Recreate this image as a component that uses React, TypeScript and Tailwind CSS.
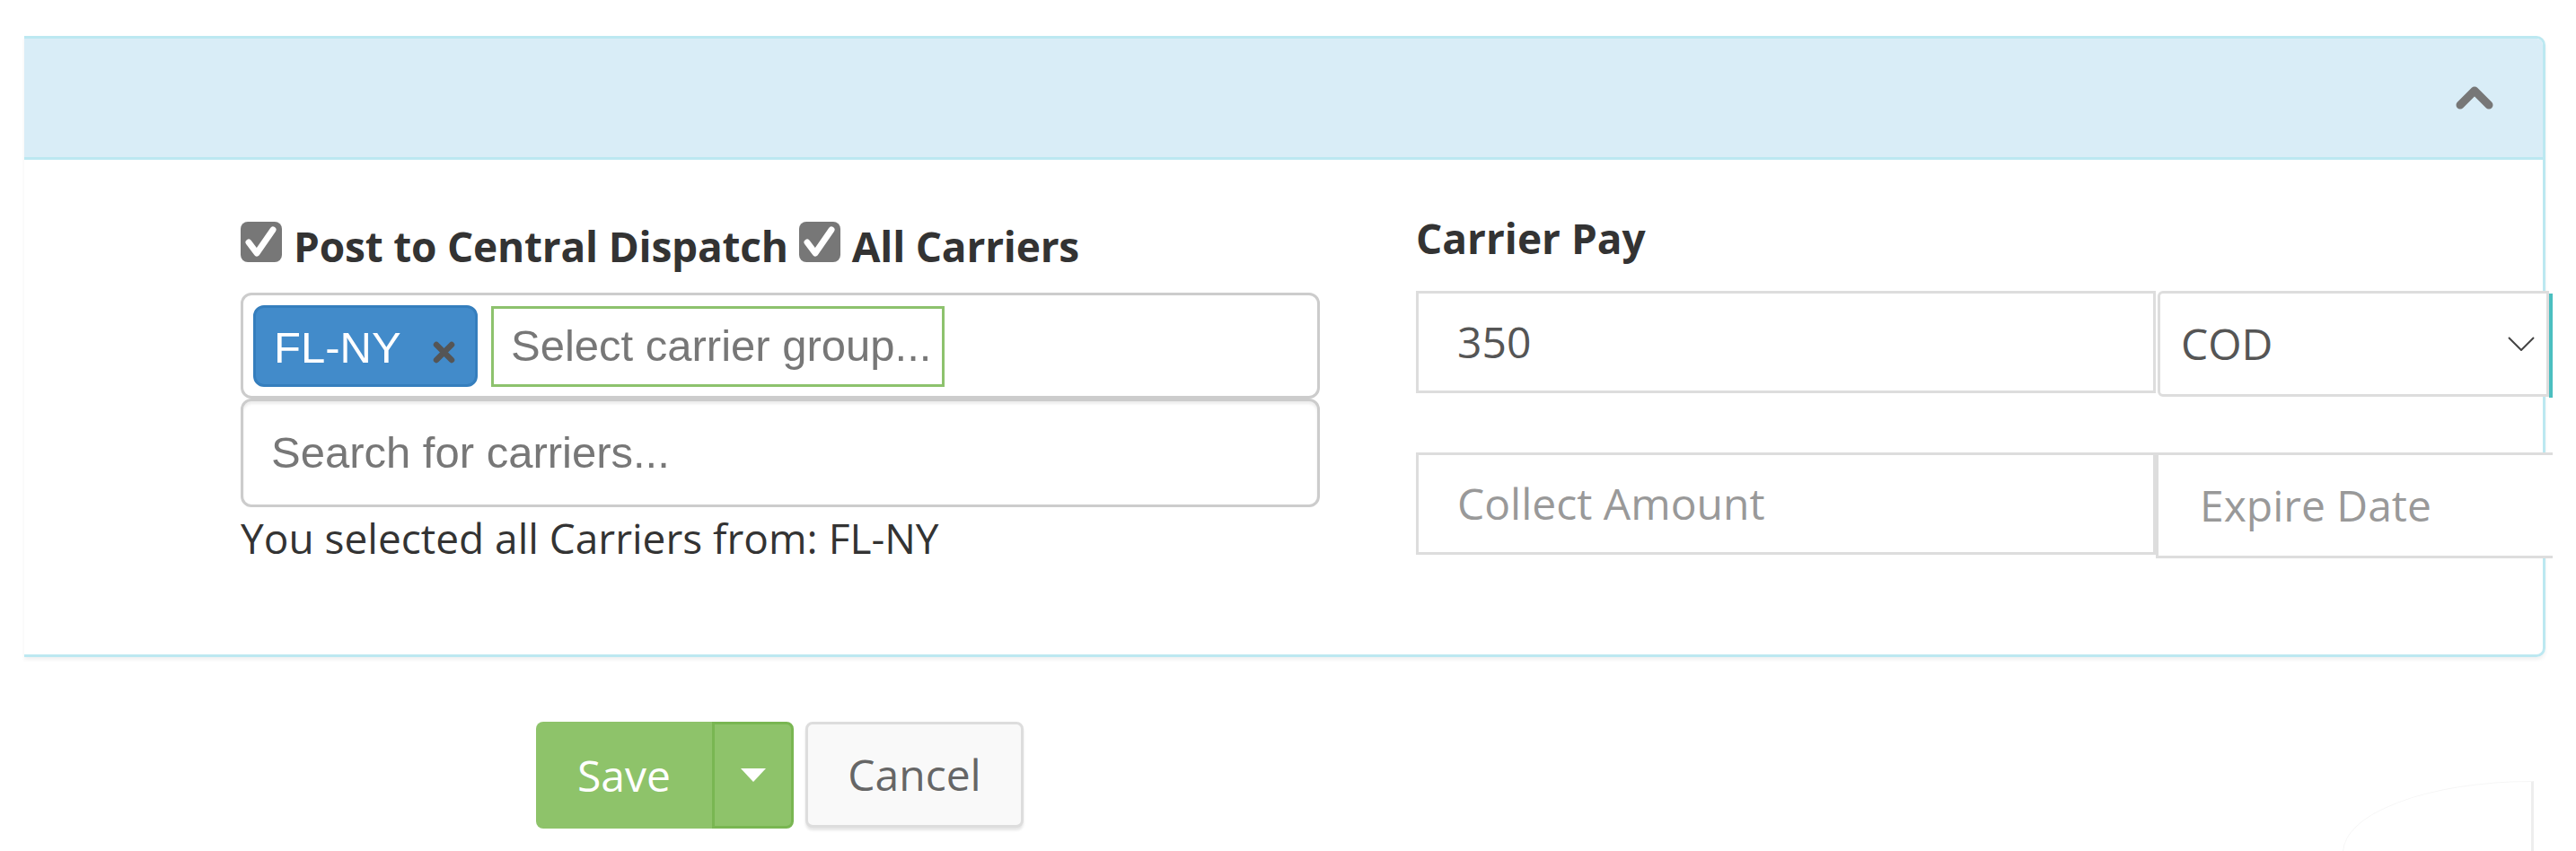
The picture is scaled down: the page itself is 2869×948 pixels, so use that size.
import React from "react";

function Check() {
  return (
    <div className="relative w-[46px] h-[45px] shrink-0 rounded-[8px] bg-[#777777]">
      <svg className="absolute left-0 top-0 block" width="46" height="45" viewBox="0 0 46 45">
        <path d="M9 23 L18 35 L36 9" fill="none" stroke="#ffffff" strokeWidth="7" strokeLinecap="round" strokeLinejoin="round" />
      </svg>
    </div>
  );
}

export default function App() {
  return (
    <div className="relative w-[2869px] h-[948px] overflow-hidden bg-white pt-[40px] font-['Open_Sans','Noto_Sans',sans-serif]">
      {/* Panel */}
      <div className="ml-[27px] w-[2808px] border-t-[3px] border-r-[3px] border-b-[3px] border-[#bce8f1] rounded-r-[10px] shadow-[0_3px_4px_rgba(0,0,0,0.06)]">
        {/* Header */}
        <div className="h-[135px] bg-[#d9edf7] border-b-[3px] border-[#bce8f1] rounded-tr-[7px] flex items-center justify-end pr-[54px]">
          <svg width="44" height="28" viewBox="0 0 44 28" className="block">
            <polyline points="6,22 22,6 38,22" fill="none" stroke="#777777" strokeWidth="9" strokeLinecap="round" strokeLinejoin="round" />
          </svg>
        </div>
        {/* Body */}
        <div className="h-[551px] flex">
          {/* Left column */}
          <div className="ml-[241px] w-[1202px] shrink-0 pt-[66px]">
            <div className="flex items-baseline h-[60px] leading-[60px] text-[46px] font-bold text-[#333333] tracking-[-0.2px]">
              <Check />
              <span className="ml-[13px]">Post to Central Dispatch</span>
              <div className="ml-[12px] flex items-baseline">
                <Check />
              </div>
              <span className="ml-[13px]">All Carriers</span>
            </div>
            <div className="mt-[22px] h-[118px] border-[3px] border-[#cccccc] rounded-[12px] flex items-start pl-[11px] pt-[11px] font-['Liberation_Sans',Arial,sans-serif] text-[49px]">
              <div className="h-[91px] w-[250px] shrink-0 bg-[#428bca] border-[3px] border-[#357ebd] rounded-[12px] flex items-center justify-between pl-[20px] pr-[22px] pt-[4px] text-white">
                <span>FL-NY</span>
                <svg width="25" height="25" viewBox="0 0 25 25" className="block mt-[10px]">
                  <path d="M4 4 L21 21 M21 4 L4 21" stroke="#555555" strokeWidth="6.5" strokeLinecap="round" />
                </svg>
              </div>
              <div className="ml-[15px] mt-[1px] h-[90px] w-[505px] shrink-0 border-[3px] border-[#8dc26d] flex items-center pl-[19px] text-[#777777] whitespace-nowrap">
                Select carrier group...
              </div>
            </div>
            <div className="h-[121px] border-[3px] border-[#cccccc] rounded-[12px] shadow-[inset_0_3px_3px_rgba(0,0,0,0.075)] flex items-center pl-[31px] font-['Liberation_Sans',Arial,sans-serif] text-[49px] text-[#777777]">
              Search for carriers...
            </div>
            <div className="mt-[4px] h-[60px] leading-[60px] text-[46px] text-[#333333]">
              You selected all Carriers from: FL-NY
            </div>
          </div>
          {/* Right column */}
          <div className="ml-[107px] w-[1266px] shrink-0 pt-[57px]">
            <div className="h-[60px] leading-[60px] text-[46px] font-bold text-[#333333]">Carrier Pay</div>
            <div className="mt-[29px] flex items-start">
              <div className="w-[824px] h-[114px] shrink-0 border-[3px] border-[#dddddd] bg-white flex items-center pl-[43px] text-[48px] text-[#555555]">
                350
              </div>
              <div className="ml-[2px] w-[436px] h-[118px] shrink-0 border-[3px] border-[#dddddd] rounded-l-[6px] bg-white flex items-center justify-between pl-[23px] pr-[13px] text-[48px] text-[#555555]">
                <span>COD</span>
                <svg width="30" height="16" viewBox="0 0 30 16" className="block">
                  <polyline points="1,1 15,15 29,1" fill="none" stroke="#444444" strokeWidth="2" />
                </svg>
              </div>
              <div className="mt-[3px] w-[4px] h-[116px] shrink-0 bg-[#4bbfc0]" />
            </div>
            <div className="mt-[61px] flex items-start">
              <div className="w-[824px] h-[114px] shrink-0 border-[3px] border-[#dddddd] bg-white flex items-center pl-[43px] text-[48px] text-[#999999]">
                Collect Amount
              </div>
              <div className="w-[442px] h-[118px] shrink-0 border-[3px] border-r-0 border-[#dddddd] bg-white flex items-center pl-[46px] text-[48px] text-[#999999]">
                Expire Date
              </div>
            </div>
          </div>
        </div>
      </div>

      {/* Buttons */}
      <div className="mt-[72px] ml-[597px] flex items-start">
        <div className="flex h-[119px]">
          <div className="w-[196px] h-full bg-[#8ec36a] rounded-l-[8px] flex items-center justify-center text-[48px] text-white">
            Save
          </div>
          <div className="w-[91px] h-full bg-[#8ec36a] border-[3px] border-[#79b652] rounded-r-[8px] flex items-center justify-center">
            <svg width="28" height="15" viewBox="0 0 28 15" className="block">
              <polygon points="0,0 28,0 14,15" fill="#ffffff" />
            </svg>
          </div>
        </div>
        <div className="ml-[13px] w-[243px] h-[118px] border-[3px] border-[#dddddd] bg-[#f9f9f9] rounded-[8px] shadow-[0_3px_3px_rgba(0,0,0,0.1)] flex items-center justify-center text-[48px] text-[#666666]">
          Cancel
        </div>
      </div>

      {/* faint widget edge at bottom right */}
      <div className="absolute left-[2609px] top-[870px] w-[213px] h-[90px] bg-white rounded-tl-[211px_80px] border-l border-t border-[#f6f6f6] border-r-[3px] border-r-[#eeeeee]" />
    </div>
  );
}
